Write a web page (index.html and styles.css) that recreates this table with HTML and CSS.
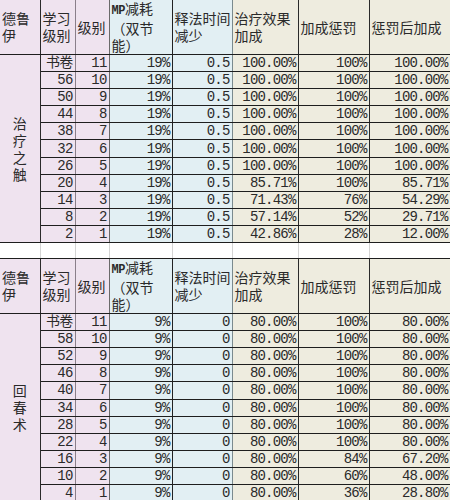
FILE: index.html
```html
<!DOCTYPE html>
<html lang="zh">
<head>
<meta charset="utf-8">
<title>德鲁伊 治疗之触 / 回春术</title>
<link rel="stylesheet" href="styles.css">
</head>
<body>
<table class="sheet">
  <colgroup>
    <col class="w1"><col class="w2"><col class="w3"><col class="w4"><col class="w5"><col class="w6"><col class="w7"><col class="w8">
  </colgroup>
  <tbody>
    <tr class="hd">
      <td class="c1 p">德鲁伊</td>
      <td class="c2 p">学习级别</td>
      <td class="c3 p">级别</td>
      <td class="c4 b"><span class="mp">MP</span>减耗（双节能）</td>
      <td class="c5 b">释法时间减少</td>
      <td class="c6 y">治疗效果加成</td>
      <td class="c7 y">加成惩罚</td>
      <td class="c8 y">惩罚后加成</td>
    </tr>
    <tr class="r">
      <td class="c1 p skill" rowspan="11">治<br>疗<br>之<br>触</td>
      <td class="c2 p n">书卷</td><td class="c3 p n">11</td><td class="c4 b n">19%</td><td class="c5 b n">0.5</td><td class="c6 y n">100.00%</td><td class="c7 y n">100%</td><td class="c8 y n">100.00%</td>
    </tr>
    <tr class="r"><td class="c2 p n">56</td><td class="c3 p n">10</td><td class="c4 b n">19%</td><td class="c5 b n">0.5</td><td class="c6 y n">100.00%</td><td class="c7 y n">100%</td><td class="c8 y n">100.00%</td></tr>
    <tr class="r"><td class="c2 p n">50</td><td class="c3 p n">9</td><td class="c4 b n">19%</td><td class="c5 b n">0.5</td><td class="c6 y n">100.00%</td><td class="c7 y n">100%</td><td class="c8 y n">100.00%</td></tr>
    <tr class="r"><td class="c2 p n">44</td><td class="c3 p n">8</td><td class="c4 b n">19%</td><td class="c5 b n">0.5</td><td class="c6 y n">100.00%</td><td class="c7 y n">100%</td><td class="c8 y n">100.00%</td></tr>
    <tr class="r"><td class="c2 p n">38</td><td class="c3 p n">7</td><td class="c4 b n">19%</td><td class="c5 b n">0.5</td><td class="c6 y n">100.00%</td><td class="c7 y n">100%</td><td class="c8 y n">100.00%</td></tr>
    <tr class="r"><td class="c2 p n">32</td><td class="c3 p n">6</td><td class="c4 b n">19%</td><td class="c5 b n">0.5</td><td class="c6 y n">100.00%</td><td class="c7 y n">100%</td><td class="c8 y n">100.00%</td></tr>
    <tr class="r"><td class="c2 p n">26</td><td class="c3 p n">5</td><td class="c4 b n">19%</td><td class="c5 b n">0.5</td><td class="c6 y n">100.00%</td><td class="c7 y n">100%</td><td class="c8 y n">100.00%</td></tr>
    <tr class="r"><td class="c2 p n">20</td><td class="c3 p n">4</td><td class="c4 b n">19%</td><td class="c5 b n">0.5</td><td class="c6 y n">85.71%</td><td class="c7 y n">100%</td><td class="c8 y n">85.71%</td></tr>
    <tr class="r"><td class="c2 p n">14</td><td class="c3 p n">3</td><td class="c4 b n">19%</td><td class="c5 b n">0.5</td><td class="c6 y n">71.43%</td><td class="c7 y n">76%</td><td class="c8 y n">54.29%</td></tr>
    <tr class="r"><td class="c2 p n">8</td><td class="c3 p n">2</td><td class="c4 b n">19%</td><td class="c5 b n">0.5</td><td class="c6 y n">57.14%</td><td class="c7 y n">52%</td><td class="c8 y n">29.71%</td></tr>
    <tr class="r"><td class="c2 p n">2</td><td class="c3 p n">1</td><td class="c4 b n">19%</td><td class="c5 b n">0.5</td><td class="c6 y n">42.86%</td><td class="c7 y n">28%</td><td class="c8 y n">12.00%</td></tr>

    <tr class="gap">
      <td></td><td></td><td></td><td></td><td></td><td></td><td></td><td></td>
    </tr>

    <tr class="hd">
      <td class="c1 p">德鲁伊</td>
      <td class="c2 p">学习级别</td>
      <td class="c3 p">级别</td>
      <td class="c4 b"><span class="mp">MP</span>减耗（双节能）</td>
      <td class="c5 b">释法时间减少</td>
      <td class="c6 y">治疗效果加成</td>
      <td class="c7 y">加成惩罚</td>
      <td class="c8 y">惩罚后加成</td>
    </tr>
    <tr class="r">
      <td class="c1 p skill" rowspan="11">回<br>春<br>术</td>
      <td class="c2 p n">书卷</td><td class="c3 p n">11</td><td class="c4 b n">9%</td><td class="c5 b n">0</td><td class="c6 y n">80.00%</td><td class="c7 y n">100%</td><td class="c8 y n">80.00%</td>
    </tr>
    <tr class="r"><td class="c2 p n">58</td><td class="c3 p n">10</td><td class="c4 b n">9%</td><td class="c5 b n">0</td><td class="c6 y n">80.00%</td><td class="c7 y n">100%</td><td class="c8 y n">80.00%</td></tr>
    <tr class="r"><td class="c2 p n">52</td><td class="c3 p n">9</td><td class="c4 b n">9%</td><td class="c5 b n">0</td><td class="c6 y n">80.00%</td><td class="c7 y n">100%</td><td class="c8 y n">80.00%</td></tr>
    <tr class="r"><td class="c2 p n">46</td><td class="c3 p n">8</td><td class="c4 b n">9%</td><td class="c5 b n">0</td><td class="c6 y n">80.00%</td><td class="c7 y n">100%</td><td class="c8 y n">80.00%</td></tr>
    <tr class="r"><td class="c2 p n">40</td><td class="c3 p n">7</td><td class="c4 b n">9%</td><td class="c5 b n">0</td><td class="c6 y n">80.00%</td><td class="c7 y n">100%</td><td class="c8 y n">80.00%</td></tr>
    <tr class="r"><td class="c2 p n">34</td><td class="c3 p n">6</td><td class="c4 b n">9%</td><td class="c5 b n">0</td><td class="c6 y n">80.00%</td><td class="c7 y n">100%</td><td class="c8 y n">80.00%</td></tr>
    <tr class="r"><td class="c2 p n">28</td><td class="c3 p n">5</td><td class="c4 b n">9%</td><td class="c5 b n">0</td><td class="c6 y n">80.00%</td><td class="c7 y n">100%</td><td class="c8 y n">80.00%</td></tr>
    <tr class="r"><td class="c2 p n">22</td><td class="c3 p n">4</td><td class="c4 b n">9%</td><td class="c5 b n">0</td><td class="c6 y n">80.00%</td><td class="c7 y n">100%</td><td class="c8 y n">80.00%</td></tr>
    <tr class="r"><td class="c2 p n">16</td><td class="c3 p n">3</td><td class="c4 b n">9%</td><td class="c5 b n">0</td><td class="c6 y n">80.00%</td><td class="c7 y n">84%</td><td class="c8 y n">67.20%</td></tr>
    <tr class="r"><td class="c2 p n">10</td><td class="c3 p n">2</td><td class="c4 b n">9%</td><td class="c5 b n">0</td><td class="c6 y n">80.00%</td><td class="c7 y n">60%</td><td class="c8 y n">48.00%</td></tr>
    <tr class="r"><td class="c2 p n">4</td><td class="c3 p n">1</td><td class="c4 b n">9%</td><td class="c5 b n">0</td><td class="c6 y n">80.00%</td><td class="c7 y n">36%</td><td class="c8 y n">28.80%</td></tr>
  </tbody>
</table>
</body>
</html>
```
FILE: styles.css
```css
html, body {
  margin: 0;
  padding: 0;
  background: #ffffff;
}

.sheet {
  width: 450px;
  table-layout: fixed;
  border-collapse: collapse;
  border-spacing: 0;
  font-family: "Noto Sans CJK SC", "Liberation Sans", sans-serif;
  font-size: 14px;
  color: #2a2a2a;
}

.w1 { width: 40px; }
.w2 { width: 35px; }
.w3 { width: 34px; }
.w4 { width: 63px; }
.w5 { width: 60px; }
.w6 { width: 66px; }
.w7 { width: 71px; }
.w8 { width: 81px; }

.sheet td {
  padding: 0 2px 0 2px;
  border-left: none;
  border-top: none;
  border-right: 1px solid #777;
  border-bottom: 1px solid #1e1e1e;
  white-space: normal;
}

.p { background: #efe3ef; }
.b { background: #e2eff3; }
.y { background: #eeecdf; }

.c1 { border-right-color: #2a2a2a !important; }
.c2 { border-right-color: #8a7f8a !important; }
.c3 { border-right-color: #6a6a6a !important; }
.c4 { border-right-color: #222 !important; }
.c5 { border-right-color: #7a8a8e !important; }
.c6 { border-right-color: #2a2a2a !important; }
.c7 { border-right-color: #2a2a2a !important; }
.c8 { border-right-color: #555 !important; }

.hd { height: 53px; }
.hd td {
  vertical-align: middle;
  text-align: left;
  line-height: 17px;
  padding-left: 2px;
  padding-right: 0;
}

.mp {
  font-family: "Liberation Mono", monospace;
  font-weight: bold;
  font-size: 12px;
  letter-spacing: -0.5px;
}

.r { height: 17.1px; }
.r td { line-height: 16px; }

.n {
  text-align: right;
  vertical-align: middle;
  font-family: "Liberation Mono", "Noto Sans CJK SC", monospace;
  font-size: 14px;
  letter-spacing: -0.8px;
  white-space: nowrap;
  overflow: hidden;
}

.skill {
  text-align: center;
  vertical-align: middle;
  line-height: 17px !important;
  padding: 0;
}

.gap { height: 16px; }
.gap td {
  background: #ffffff;
  border-right-color: #d4d4d4;
}
```
